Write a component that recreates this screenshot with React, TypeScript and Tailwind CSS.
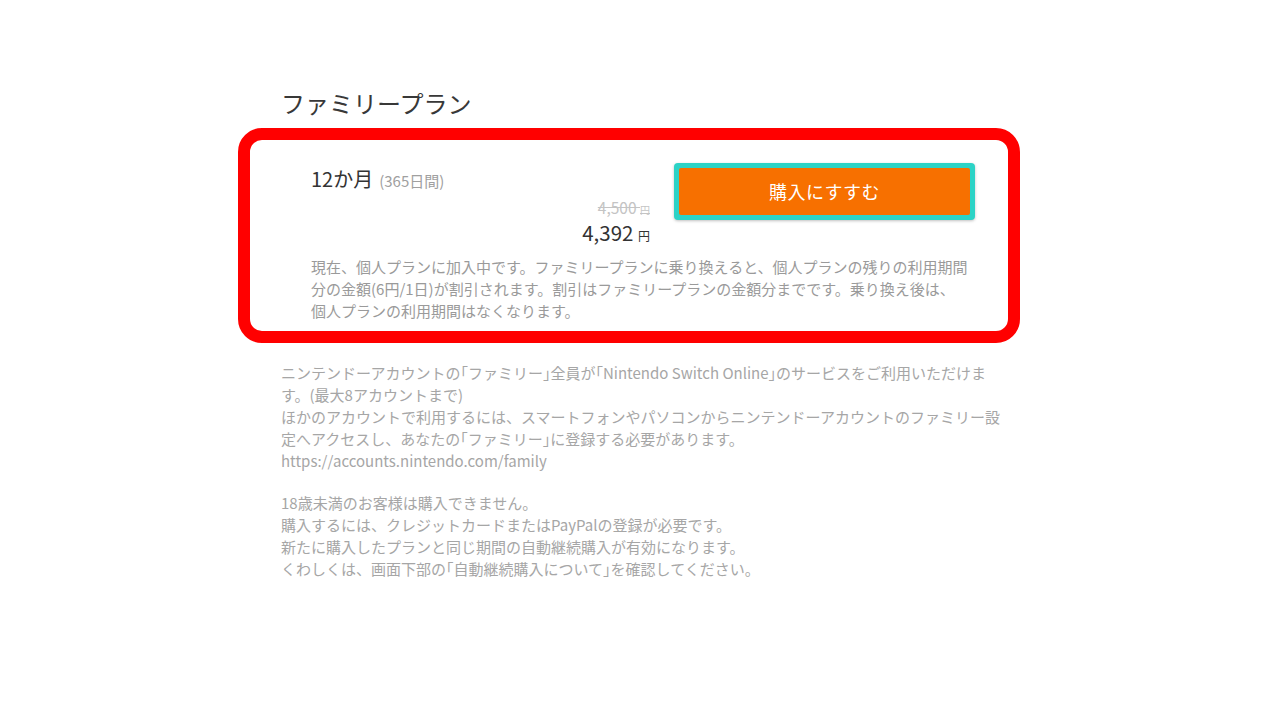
// Corner brackets in the reference are set half-width
function Q({ children }: { children: React.ReactNode }) {
  return <span className="[font-feature-settings:'halt']">{children}</span>;
}

export default function App() {
  const font = { fontFamily: '"Noto Sans CJK JP", "Noto Sans", sans-serif' };

  return (
    <div className="w-[1280px] h-[720px] bg-white overflow-hidden" style={font}>
      <div className="ml-[238px] w-[782px] pt-[86px]">
        {/* Title */}
        <h1 className="ml-[43px] text-[24px] leading-[34px] text-[#383838]">ファミリープラン</h1>

        {/* Plan card */}
        <div className="mt-[8px] border-[12px] border-[#ff0000] rounded-[24px] bg-white pl-[61px] pr-[33px] pt-[26px] pb-[9px]">
          <div className="flex h-[80px]">
            <div className="flex-1 flex items-baseline gap-[6px] leading-[26px]">
              <span className="text-[20px] text-[#333]">12か月</span>
              <span className="text-[15px] text-[#a0a0a0]">(365日間)</span>
            </div>

            <div className="flex flex-col items-end pt-[30px] mr-[24px]">
              <div className="text-[15.5px] leading-[22px] text-[#c4c4c4] line-through">
                4,500 <span className="text-[10px] leading-none">円</span>
              </div>
              <div className="text-[20.5px] leading-[28px] text-[#333]">
                4,392 <span className="text-[12px] leading-none">円</span>
              </div>
            </div>

            <div className="-mt-[3px] w-[301px] h-[57px] rounded-[4px] bg-[#2cd3c6] p-[5px] shadow-[0_1px_3px_rgba(0,0,0,0.25)]">
              <button className="w-full h-full rounded-[2px] bg-[#f77000] text-white text-[18px] tracking-[0.5px]">
                購入にすすむ
              </button>
            </div>
          </div>

          <p className="mt-[10px] text-[15px] leading-[22px] text-[#9a9a9a] whitespace-nowrap">
            現在、個人プランに加入中です。ファミリープランに乗り換えると、個人プランの残りの利用期間
            <br />
            分の金額(6円/1日)が割引されます。割引はファミリープランの金額分までです。乗り換え後は、
            <br />
            個人プランの利用期間はなくなります。
          </p>
        </div>

        {/* Notes */}
        <div className="ml-[43px] mt-[19px] text-[15px] leading-[22px] text-[#a6a6a6] whitespace-nowrap">
          <p>
            ニンテンドーアカウントの<Q>「</Q>ファミリー<Q>」</Q>全員が<Q>「</Q>Nintendo Switch Online<Q>」</Q>のサービスをご利用いただけま
            <br />
            す。(最大8アカウントまで)
          </p>
          <p>
            ほかのアカウントで利用するには、スマートフォンやパソコンからニンテンドーアカウントのファミリー設
            <br />
            定へアクセスし、あなたの<Q>「</Q>ファミリー<Q>」</Q>に登録する必要があります。
          </p>
          <p>https://accounts.nintendo.com/family</p>

          <div className="mt-[20px]">
            <p>18歳未満のお客様は購入できません。</p>
            <p>購入するには、クレジットカードまたはPayPalの登録が必要です。</p>
            <p>新たに購入したプランと同じ期間の自動継続購入が有効になります。</p>
            <p>
              くわしくは、画面下部の<Q>「</Q>自動継続購入について<Q>」</Q>を確認してください。
            </p>
          </div>
        </div>
      </div>
    </div>
  );
}
